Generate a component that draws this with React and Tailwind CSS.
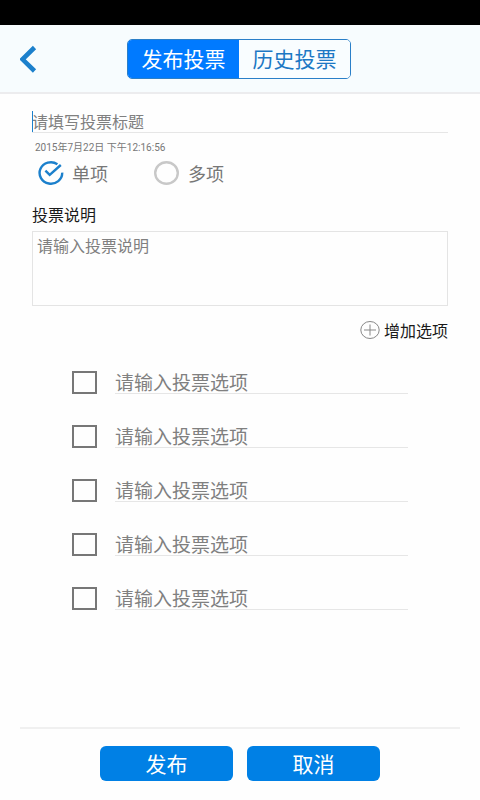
import { useState } from "react";

const choices = [
  { value: "single", label: "单项" },
  { value: "multiple", label: "多项" },
];

const options = [1, 2, 3, 4, 5];

function RadioIcon({ checked }) {
  if (!checked) {
    return (
      <svg viewBox="0 0 26 26" className="size-[26px]" fill="none" aria-hidden="true">
        <ellipse cx="12.5" cy="13" rx="11.3" ry="10.8" stroke="#c8c8c8" strokeWidth="2.4" />
      </svg>
    );
  }
  return (
    <svg viewBox="0 0 26 26" className="size-[26px]" fill="none" stroke="#1c80cc" aria-hidden="true">
      <path d="M19.4 4.2A11.3 10.7 0 1 0 24.2 12.6" strokeWidth="2.4" />
      <path d="M7.4 10.6L11.7 14.9L22.8 5" strokeWidth="2.4" />
    </svg>
  );
}

function Header() {
  return (
    <header className="relative flex h-[69px] items-center justify-center border-b-2 border-[#ececee] bg-[#f7fcfe] pr-0.5">
      <button type="button" aria-label="返回" className="absolute left-4 p-1">
        <svg viewBox="0 0 20 30" className="h-[30px] w-5" fill="none" aria-hidden="true">
          <path d="M14.5 3.5L2.5 15.3L14.5 27" stroke="#1c80cc" strokeWidth="4.6" />
        </svg>
      </button>
      <nav className="flex h-10 w-[224px] overflow-hidden rounded-[5px] border border-[#2a7fc8] text-[21px]">
        <button type="button" className="flex-1 bg-[#007aff] text-white">
          发布投票
        </button>
        <button type="button" className="flex-1 bg-[#f9fdff] text-[#1c78c4]">
          历史投票
        </button>
      </nav>
    </header>
  );
}

function App() {
  const [type, setType] = useState("single");

  return (
    <div className="flex min-h-screen flex-col bg-[#fefefe] font-['Noto_Sans_CJK_SC',sans-serif]">
      <div className="h-[25px] bg-black" />
      <Header />

      <main className="px-8 pt-4">
        <div className="relative">
          <input
            type="text"
            aria-label="投票标题"
            placeholder="请填写投票标题"
            className="block h-[23px] w-full border-b border-[#e6e6e6] text-base leading-5 outline-none placeholder:text-[#808080]"
          />
          <span className="absolute top-px left-0 h-[21px] w-px bg-[#1c80cc]" />
        </div>

        <p className="mt-2 ml-[3px] font-['Roboto','Noto_Sans_CJK_SC',sans-serif] text-[10px] leading-[14px] text-[#777777]">
          2015年7月22日 下午12:16:56
        </p>

        <div className="mt-[5px] ml-[6px] flex gap-[46px]">
          {choices.map((choice) => (
            <label key={choice.value} className="flex items-center gap-2 text-lg leading-[26px] text-[#777777]">
              <input
                type="radio"
                name="type"
                value={choice.value}
                checked={type === choice.value}
                onChange={() => setType(choice.value)}
                className="sr-only"
              />
              <RadioIcon checked={type === choice.value} />
              {choice.label}
            </label>
          ))}
        </div>

        <label htmlFor="desc" className="mt-4 block text-base leading-6 text-[#1a1a1a]">
          投票说明
        </label>
        <textarea
          id="desc"
          placeholder="请输入投票说明"
          className="mt-[5px] block h-[75px] w-full resize-none border border-[#e4e4e4] px-1 py-[3px] text-base leading-5 outline-none placeholder:text-[#808080]"
        />

        <div className="mt-3 flex justify-end">
          <button type="button" className="flex items-center gap-1 text-base leading-6 text-[#1a1a1a]">
            <svg viewBox="0 0 20 20" className="size-5" fill="none" stroke="#888888" aria-hidden="true">
              <ellipse cx="10" cy="10" rx="9.2" ry="8.5" />
              <path d="M4 10H16M10 4.5V15.5" />
            </svg>
            增加选项
          </button>
        </div>

        <ul className="mt-7 flex flex-col gap-[30px] px-10">
          {options.map((n) => (
            <li key={n} className="flex h-6 items-center gap-[18px]">
              <input
                type="checkbox"
                aria-label={`选项${n}`}
                className="h-[23px] w-[25px] shrink-0 appearance-none border-2 border-[#777777] checked:bg-[#0080e5]"
              />
              <input
                type="text"
                aria-label={`选项${n}内容`}
                placeholder="请输入投票选项"
                className="h-6 min-w-0 flex-1 border-b border-[#e6e6e6] pt-px text-[19px] leading-6 outline-none placeholder:text-[#808080]"
              />
            </li>
          ))}
        </ul>
      </main>

      <footer className="mx-5 mt-auto flex justify-center gap-[14px] border-t-2 border-[#f0f0f0] pt-[17px] pb-[19px]">
        <button type="button" className="h-[35px] w-[133px] rounded-md bg-[#0080e5] text-[21px] leading-[35px] text-white">
          发布
        </button>
        <button type="button" className="h-[35px] w-[133px] rounded-md bg-[#0080e5] text-[21px] leading-[35px] text-white">
          取消
        </button>
      </footer>
    </div>
  );
}

export default App;
